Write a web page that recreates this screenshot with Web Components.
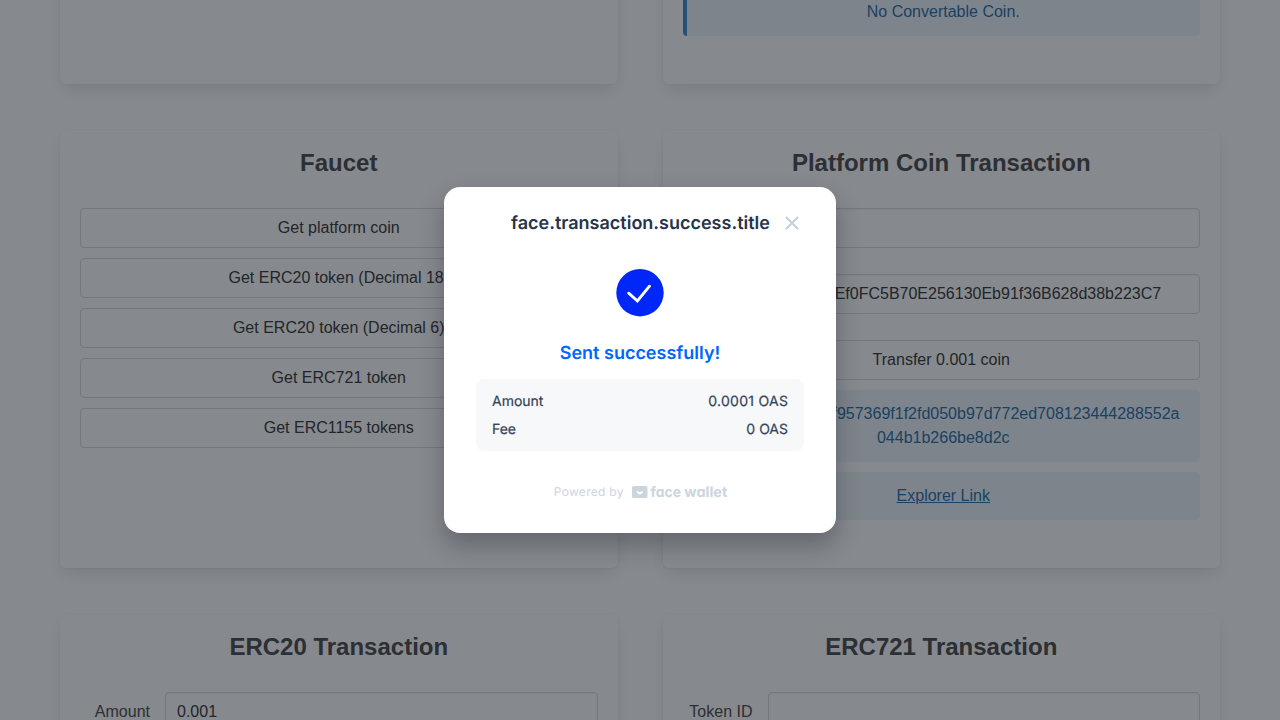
<!DOCTYPE html>
<html lang="en">
<head>
<meta charset="utf-8">
<title>Face Wallet Sample</title>
<style>
html,body{margin:0;height:720px;overflow:hidden;background:#fff}
body{font:16px/24px "Liberation Sans",Arial,sans-serif;color:#4a4a4a}
</style>
</head>
<body>
<demo-app></demo-app>
<script>
const define = (name, html) => {
  const t = document.createElement('template');
  t.innerHTML = html;
  customElements.define(name, class extends HTMLElement {
    constructor() {
      super();
      this.attachShadow({mode: 'open'}).append(t.content.cloneNode(true));
    }
  });
};

define('demo-card', `<style>
:host{display:block;box-sizing:border-box;height:438px;padding:20px;border-radius:6px;background:#fff;box-shadow:0 8px 16px -2px rgba(10,10,10,.1),0 0 0 1px rgba(10,10,10,.02)}
h4{margin:0 0 33px;font-size:24px;line-height:25px;font-weight:700;text-align:center}
</style><h4><slot name="title"></slot></h4><slot></slot>`);

define('demo-button', `<style>
:host{display:block;margin-bottom:10px}
button{display:block;box-sizing:border-box;width:100%;height:40px;border:1px solid #dbdbdb;border-radius:4px;background:#fff;color:#363636;font:inherit;padding:0 16px}
</style><button><slot></slot></button>`);

define('demo-field', `<style>
:host{display:flex;height:40px;margin-bottom:26px}
label{width:70px;margin-right:15px;text-align:right;line-height:40px;white-space:nowrap}
div{flex:1;box-sizing:border-box;border:1px solid #dbdbdb;border-radius:4px;padding:7px 11px;box-shadow:inset 0 1px 2px rgba(10,10,10,.05);color:#363636;white-space:nowrap;overflow:hidden}
</style><label><slot name="label"></slot></label><div><slot></slot></div>`);

define('demo-message', `<style>
:host{display:block;box-sizing:border-box;margin-bottom:10px;padding:12px 16px;border-left:4px solid #3e8ed0;border-radius:4px;background:#eff5fb;color:#296fa8;text-align:center}
</style><slot></slot>`);

define('detail-row', `<style>
:host{display:flex;justify-content:space-between;font-weight:400;font-size:14px;line-height:20px;color:#33435a;-webkit-text-stroke:.2px #33435a}
</style><slot name="k"></slot><slot name="v"></slot>`);

define('success-icon', `<style>:host{display:block;width:48px;height:48px}svg{display:block}</style>
<svg width="48" height="48" viewBox="0 0 48 48"><circle cx="24" cy="23.7" r="23.7" fill="#0026f8"/><path d="M12.7 24.2 21.4 32 33.5 17.2" fill="none" stroke="#fff" stroke-width="2.9" stroke-linecap="round" stroke-linejoin="miter"/></svg>`);

define('wallet-logo', `<style>
:host{display:flex;align-items:center;height:16px}
svg{display:block;overflow:visible}
text{font:700 14.6px Inter;letter-spacing:0;font-feature-settings:"cv11"}
</style><svg width="97" height="16" viewBox="0 0 97 16" fill="#ccd5df"><path fill-rule="evenodd" d="M2 2H14Q15.5 2 15.5 3.5V12.5Q15.5 14 14 14H1.5Q0 14 0 12.5V3.5Q0 2 1.5 2ZM4.6 7.2Q5.2 10.3 7.8 10.3 10.4 10.3 11 7.2L9.6 7.2Q7.8 8.6 6 7.2Z"/><text x="18.5" y="13.4" textLength="30.4" lengthAdjust="spacingAndGlyphs">face</text><text x="52.3" y="13.4" textLength="43" lengthAdjust="spacingAndGlyphs">wallet</text></svg>`);

define('wallet-modal', `<style>
:host{display:flex;flex-direction:column;align-items:center;box-sizing:border-box;width:392px;height:346px;padding:24px 32px;border-radius:16px;background:#fff;font-family:Inter,sans-serif;text-rendering:geometricPrecision;box-shadow:0 12px 24px rgba(20,22,40,.3)}
header{display:grid;grid-template-columns:24px 1fr 24px;align-items:center;width:328px;height:24px}
h1{grid-column:2;margin:0;padding:2px 0 0 1px;font-size:18px;line-height:22px;font-weight:600;color:#273448;text-align:center;white-space:nowrap}
header svg{grid-column:3}
success-icon{margin-top:34px}
h2{margin:25px 0 13px;font-size:18px;line-height:24px;font-weight:600;color:#0066ff}
section{display:flex;flex-direction:column;gap:8px;box-sizing:border-box;width:328px;height:72px;padding:13px 16px 11px;border-radius:8px;background:#f7f8fa}
.amount{letter-spacing:.3px;margin-right:-.3px}
footer{display:flex;align-items:center;gap:8px;margin:33px 0 0 2.6px;font-size:12px;line-height:16px;letter-spacing:.3px;color:#ccd5df}
</style>
<header><h1>face.transaction.success.title</h1><svg width="24" height="24" viewBox="0 0 24 24"><path d="M6.5 6.5 17.5 17.5M17.5 6.5 6.5 17.5" stroke="#c5d0db" stroke-width="2" stroke-linecap="round"/></svg></header>
<success-icon></success-icon>
<h2>Sent successfully!</h2>
<section><detail-row><span slot="k">Amount</span><span slot="v" class="amount">0.0001 OAS</span></detail-row><detail-row><span slot="k">Fee</span><span slot="v">0 OAS</span></detail-row></section>
<footer><span>Powered by</span><wallet-logo></wallet-logo></footer>`);

define('demo-app', `<style>
:host{display:block;position:relative;height:720px;overflow:hidden}
main{display:grid;grid-template-columns:557.5px 557.5px;grid-auto-rows:438px;gap:46px 45px;padding:0 60px;margin-top:-354px}
.overlay{position:absolute;inset:0;display:flex;align-items:center;justify-content:center;background:rgba(13,19,28,.5)}
.end{display:flex;flex-direction:column;justify-content:flex-end;height:337px}
.end demo-message{margin-bottom:0}
u{text-decoration:underline}
</style>
<main>
<demo-card></demo-card>
<demo-card><div class="end"><demo-message>No Convertable Coin.</demo-message></div></demo-card>
<demo-card><span slot="title">Faucet</span>
<demo-button>Get platform coin</demo-button><demo-button>Get ERC20 token (Decimal 18)</demo-button><demo-button>Get ERC20 token (Decimal 6)</demo-button><demo-button>Get ERC721 token</demo-button><demo-button>Get ERC1155 tokens</demo-button></demo-card>
<demo-card><span slot="title">Platform Coin Transaction</span>
<demo-field><span slot="label">Amount</span></demo-field>
<demo-field><span slot="label">To</span>0xb5D2Ef0FC5B70E256130Eb91f36B628d38b223C7</demo-field>
<demo-button>Transfer 0.001 coin</demo-button>
<demo-message>Hash: 0x7b31e80f957369f1f2fd050b97d772ed708123444288552a<br>044b1b266be8d2c</demo-message>
<demo-message><u>Explorer Link</u></demo-message></demo-card>
<demo-card><span slot="title">ERC20 Transaction</span><demo-field><span slot="label">Amount</span>0.001</demo-field></demo-card>
<demo-card><span slot="title">ERC721 Transaction</span><demo-field><span slot="label">Token ID</span></demo-field></demo-card>
</main>
<div class="overlay"><wallet-modal></wallet-modal></div>`);
</script>
</body>
</html>
